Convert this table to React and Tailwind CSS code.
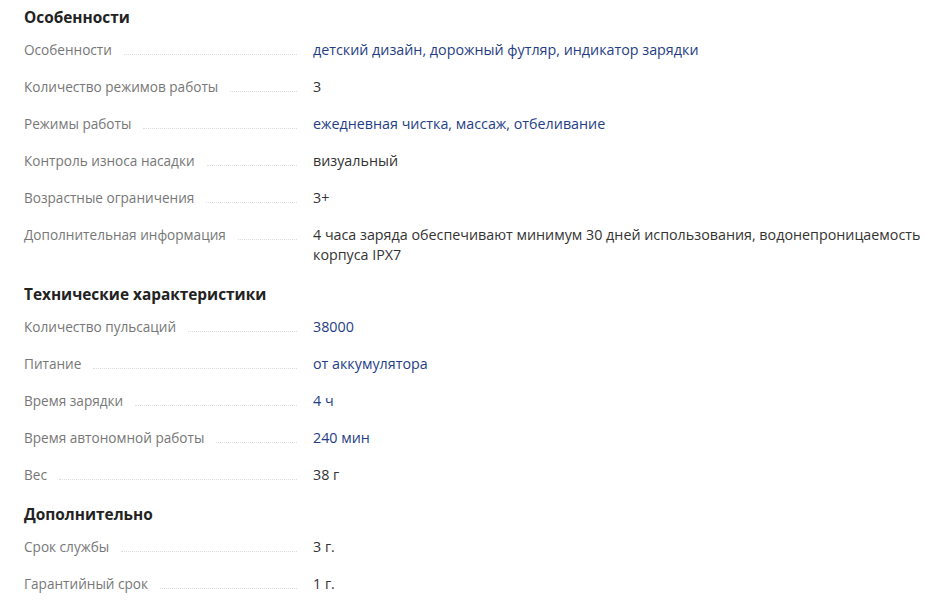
const sections = [
  {
    title: "Особенности",
    rows: [
      { label: "Особенности", value: "детский дизайн, дорожный футляр, индикатор зарядки", link: true },
      { label: "Количество режимов работы", value: "3" },
      { label: "Режимы работы", value: "ежедневная чистка, массаж, отбеливание", link: true },
      { label: "Контроль износа насадки", value: "визуальный" },
      { label: "Возрастные ограничения", value: "3+" },
      {
        label: "Дополнительная информация",
        value: "4 часа заряда обеспечивают минимум 30 дней использования, водонепроницаемость корпуса IPX7",
      },
    ],
  },
  {
    title: "Технические характеристики",
    rows: [
      { label: "Количество пульсаций", value: "38000", link: true },
      { label: "Питание", value: "от аккумулятора", link: true },
      { label: "Время зарядки", value: "4 ч", link: true },
      { label: "Время автономной работы", value: "240 мин", link: true },
      { label: "Вес", value: "38 г" },
    ],
  },
  {
    title: "Дополнительно",
    rows: [
      { label: "Срок службы", value: "3 г." },
      { label: "Гарантийный срок", value: "1 г." },
    ],
  },
];

function Row({ label, value, link }) {
  return (
    <div className="flex items-start leading-[20px]">
      <div className="flex w-[289px] shrink-0 items-end pr-4">
        <span className="text-[13.6px] text-[#777]">{label}</span>
        <span className="ml-3 mb-[5px] flex-1 border-b border-dotted border-[#dcdcdc]" />
      </div>
      <div className={`w-[612px] text-[14.3px] ${link ? "text-[#1f3e86]" : "text-[#333]"}`}>{value}</div>
    </div>
  );
}

export default function App() {
  return (
    <div
      className="min-h-screen bg-white pl-6 pt-[6px] flex flex-col gap-[18px]"
      style={{ fontFamily: '"Open Sans", "Noto Sans", sans-serif' }}
    >
      {sections.map((s) => (
        <div key={s.title} className="flex flex-col">
          <h2 className="text-[15.4px] leading-[24px] font-bold text-[#222] mb-[10px]">{s.title}</h2>
          <div className="flex flex-col gap-[17px]">
            {s.rows.map((r) => (
              <Row key={r.label} {...r} />
            ))}
          </div>
        </div>
      ))}
    </div>
  );
}
